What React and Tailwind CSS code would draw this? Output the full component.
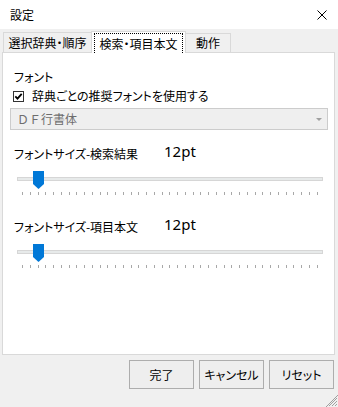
import React from "react";

const ticks = Array.from({ length: 39 });

const Slider = ({ pos }) => (
  <div className="ml-[14px] w-[306px]">
    <div className="relative h-[18px]">
      <div className="absolute left-0 right-0 top-[6px] h-[4px] border border-[#d6d6d6] bg-[#e7eaea]" />
      <svg className="absolute top-0" style={{ left: pos }} width="11" height="18" viewBox="0 0 11 18">
        <path d="M0 0H11V13L5.5 18L0 13Z" fill="#0078d7" />
      </svg>
    </div>
    <div className="mx-[5px] mt-[3px] flex h-[3px] justify-between">
      {ticks.map((_, i) => (
        <span key={i} className="h-full w-px bg-[#a8a8a8]" />
      ))}
    </div>
  </div>
);

const SizeRow = ({ label, className }) => (
  <div className={"ml-[11px] flex h-[16px] items-center " + className}>
    <span className="w-[150px] text-[12px] leading-[16px]">{label}</span>
    <span className="mb-[6px] font-['Noto_Sans',sans-serif] text-[15px] leading-[18px] [font-feature-settings:normal]">12pt</span>
  </div>
);

const Btn = ({ children }) => (
  <button className="flex h-[29px] w-[65px] items-center justify-center border border-[#adadad] bg-[#eeeeee] text-[12px] leading-[16px] text-black">
    {children}
  </button>
);

const App = () => {
  return (
    <div className="flex h-[407px] w-[338px] flex-col overflow-hidden bg-[#f0f0f0] font-['Noto_Sans_CJK_JP','Noto_Sans',sans-serif] text-black [font-feature-settings:'palt']">
      {/* title bar */}
      <div className="flex h-[29px] items-center justify-between bg-white">
        <span className="ml-[10px] text-[12px] leading-[16px]">設定</span>
        <svg className="mr-[11px]" width="10" height="10" viewBox="0 0 10 10">
          <path d="M0.5 0.5L9.5 9.5M9.5 0.5L0.5 9.5" stroke="#000" strokeWidth="1" />
        </svg>
      </div>

      {/* tabs */}
      <div className="relative z-10 -mb-px flex h-[24px] items-end">
        <div className="mb-px ml-[3px] flex h-[20px] w-[89px] items-center justify-center border border-b-0 border-[#d9d9d9] bg-[#f0f0f0] text-[12px] leading-[16px] whitespace-nowrap">
          選択辞典・順序
        </div>
        <div className="-ml-px h-[22px] w-[95px] border border-b-0 border-[#d9d9d9] bg-white px-[2px] pt-[1px]">
          <div className="flex h-full items-center justify-center border border-b-0 border-dotted border-black text-[12px] leading-[16px] whitespace-nowrap">
            検索・項目本文
          </div>
        </div>
        <div className="mb-px flex h-[19px] w-[45px] items-center justify-center border border-b-0 border-l-0 border-[#d9d9d9] bg-[#f0f0f0] text-[12px] leading-[16px]">
          動作
        </div>
      </div>

      {/* panel */}
      <div className="ml-[2px] flex h-[303px] w-[333px] flex-col border border-[#d9d9d9] bg-white">
        <div className="ml-[11px] mt-[16px] text-[12px] leading-[16px]">フォント</div>
        <div className="ml-[10px] mt-[3px] flex h-[16px] items-center gap-[8px]">
          <svg width="11" height="11" viewBox="0 0 11 11">
            <rect x="0.5" y="0.5" width="10" height="10" fill="#fff" stroke="#333" />
            <path d="M2.3 5.3L4.5 7.6L8.7 2.8" fill="none" stroke="#000" strokeWidth="1.8" />
          </svg>
          <span className="text-[12px] leading-[16px]">辞典ごとの推奨フォントを使用する</span>
        </div>
        <div className="ml-[7px] mt-[4px] flex h-[22px] w-[318px] items-center justify-between border border-[#cccccc] bg-[#efefef] pl-[6px] pr-[5px]">
          <span className="text-[12px] leading-[16px] text-[#6d6d6d] [font-feature-settings:normal]">ＤＦ行書体</span>
          <svg width="6" height="3" viewBox="0 0 6 3">
            <path d="M0 0H6L3 3Z" fill="#a0a0a0" />
          </svg>
        </div>

        <SizeRow label="フォントサイズ-検索結果" className="mt-[16px]" />
        <div className="mt-[9px]">
          <Slider pos={16} />
        </div>

        <SizeRow label="フォントサイズ-項目本文" className="mt-[24px]" />
        <div className="mt-[9px]">
          <Slider pos={16} />
        </div>
      </div>

      {/* buttons */}
      <div className="mt-[5px] flex justify-end gap-[5px] pr-[4px]">
        <Btn>完了</Btn>
        <Btn>キャンセル</Btn>
        <Btn>リセット</Btn>
      </div>
      <div className="mt-[6px] flex justify-end">
        <svg width="12" height="12" viewBox="0 0 12 12">
          <path d="M11 3L3 11M11 6L6 11M11 9L9 11M12 0L0 12" stroke="#a0a0a0" strokeWidth="1" />
        </svg>
      </div>
    </div>
  );
};

export default App;
